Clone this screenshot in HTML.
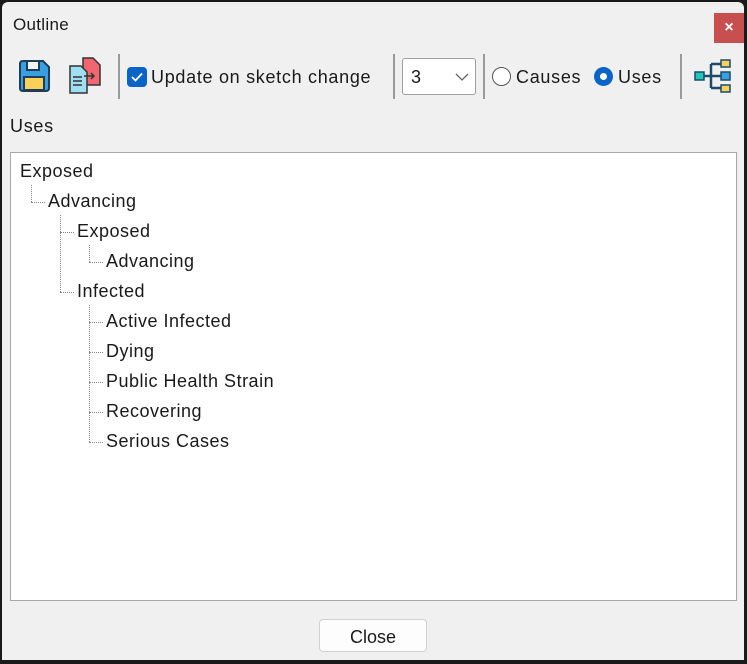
<!DOCTYPE html>
<html><head><meta charset="utf-8"><style>
*{margin:0;padding:0;box-sizing:border-box}
body{width:747px;height:664px;background:#1a1a1a;font-family:"Liberation Sans",sans-serif;position:relative;overflow:hidden}
.win{position:absolute;left:2px;top:2px;width:742px;height:658px;background:#f0f0f0;border-radius:6px 6px 0 0}
.t{position:absolute;color:#1a1a1a;font-size:18px;white-space:nowrap}
.sp{letter-spacing:0.7px}
.sep{position:absolute;top:52px;width:2px;height:45px;background:#9a9a9a}
.tree{position:absolute;left:10px;top:152px;width:727px;height:449px;background:#fff;border:1px solid #a8a8a8}
.tree .t{line-height:20px;letter-spacing:0.5px}
.dv{position:absolute;border-left:1px dotted #888;width:0}
.dh{position:absolute;border-top:1px dotted #888;height:0}
</style></head><body>
<div class="win">
<div class="t" style="left:11px;top:13px;font-size:17px;letter-spacing:0.3px">Outline</div>
<div style="position:absolute;left:712px;top:11px;width:30px;height:30px;background:#c84f4f;color:#fff;font-size:16px;text-align:center;line-height:30px;font-weight:bold">×</div>
<svg style="position:absolute;left:14px;top:56px" width="36" height="36" viewBox="0 0 36 36">
<path d="M4 6 q0-3 3-3 h20 l6 6 v21 q0 3-3 3 h-23 q-3 0-3-3z" fill="#3a9fe0" stroke="#1d3d5a" stroke-width="2"/>
<rect x="11" y="3" width="12" height="9" fill="#f3f3f3" stroke="#1d3d5a" stroke-width="2"/>
<rect x="8" y="19" width="20" height="13" fill="#f7d15a" stroke="#1d3d5a" stroke-width="2"/>
</svg>
<svg style="position:absolute;left:66px;top:54px" width="40" height="40" viewBox="0 0 40 40">
<path d="M15 2 h10 l7 7 v20 h-17z" fill="#f26671" stroke="#333" stroke-width="1.5"/>
<path d="M2 10 h11 l6 6 v21 h-17z" fill="#9fdff2" stroke="#333" stroke-width="1.5"/>
<path d="M5 21h9M5 25h9M5 29h9" stroke="#333" stroke-width="1.5"/>
<path d="M16 20h10M23 17l3 3-3 3" stroke="#333" stroke-width="1.5" fill="none"/>
</svg>
<div class="sep" style="left:116px"></div>
<div style="position:absolute;left:125px;top:65px;width:20px;height:20px;background:#0a64c8;border-radius:4px"><svg width="20" height="20"><path d="M5 10l3.5 3.5 6.5-7" stroke="#fff" stroke-width="1.8" fill="none"/></svg></div>
<div class="t sp" style="left:149px;top:65px">Update on sketch change</div>
<div class="sep" style="left:391px"></div>
<div style="position:absolute;left:400px;top:56px;width:74px;height:37px;background:#fff;border:1px solid #a0a0a0;border-radius:3px"></div>
<div class="t" style="left:409px;top:65px">3</div>
<svg style="position:absolute;left:453px;top:70px" width="14" height="10"><path d="M1 2l6 6 6-6" stroke="#666" stroke-width="1.3" fill="none"/></svg>
<div class="sep" style="left:481px"></div>
<div style="position:absolute;left:490px;top:65px;width:19px;height:19px;border:1.5px solid #555;border-radius:50%;background:#fff"></div>
<div class="t sp" style="left:514px;top:65px">Causes</div>
<div style="position:absolute;left:592px;top:65px;width:19px;height:19px;border-radius:50%;background:#0a64c8"><div style="position:absolute;left:6px;top:6px;width:7px;height:7px;border-radius:50%;background:#fff"></div></div>
<div class="t sp" style="left:616px;top:65px">Uses</div>
<div class="sep" style="left:678px"></div>
<svg style="position:absolute;left:691px;top:54px" width="40" height="40" viewBox="0 0 40 40">
<path d="M11 20h7M18 8v24M18 8h12M18 20h12M18 32h12" stroke="#1d4a6a" stroke-width="2.5" fill="none"/>
<rect x="2" y="16" width="9" height="8" fill="#1ec9b8" stroke="#1d4a6a" stroke-width="1.5"/>
<rect x="28" y="4" width="9" height="7" fill="#f7d15a" stroke="#1d4a6a" stroke-width="1.5"/>
<rect x="28" y="16" width="9" height="8" fill="#3a9fe0" stroke="#1d4a6a" stroke-width="1.5"/>
<rect x="28" y="29" width="9" height="7" fill="#f7d15a" stroke="#1d4a6a" stroke-width="1.5"/>
</svg>
<div class="t sp" style="left:8px;top:114px">Uses</div>
</div>
<div class="tree">
<div class="dv" style="left:20px;top:32px;height:17px"></div><div class="dh" style="left:20px;top:49px;width:14px"></div>
<div class="dv" style="left:49px;top:62px;height:77px"></div><div class="dh" style="left:49px;top:79px;width:14px"></div><div class="dh" style="left:49px;top:139px;width:14px"></div>
<div class="dv" style="left:78px;top:92px;height:17px"></div><div class="dh" style="left:78px;top:109px;width:14px"></div>
<div class="dv" style="left:78px;top:152px;height:137px"></div>
<div class="dh" style="left:78px;top:169px;width:14px"></div><div class="dh" style="left:78px;top:199px;width:14px"></div><div class="dh" style="left:78px;top:229px;width:14px"></div><div class="dh" style="left:78px;top:259px;width:14px"></div><div class="dh" style="left:78px;top:289px;width:14px"></div>
<div class="t" style="left:9px;top:8px">Exposed</div>
<div class="t" style="left:37px;top:38px">Advancing</div>
<div class="t" style="left:66px;top:68px">Exposed</div>
<div class="t" style="left:95px;top:98px">Advancing</div>
<div class="t" style="left:66px;top:128px">Infected</div>
<div class="t" style="left:95px;top:158px">Active Infected</div>
<div class="t" style="left:95px;top:188px">Dying</div>
<div class="t" style="left:95px;top:218px">Public Health Strain</div>
<div class="t" style="left:95px;top:248px">Recovering</div>
<div class="t" style="left:95px;top:278px">Serious Cases</div>
</div>
<div style="position:absolute;left:319px;top:619px;width:108px;height:33px;background:#fdfdfd;border:1px solid #d0d0d0;border-radius:4px;text-align:center;line-height:35px;font-size:18px;color:#1a1a1a">Close</div>
</body></html>
